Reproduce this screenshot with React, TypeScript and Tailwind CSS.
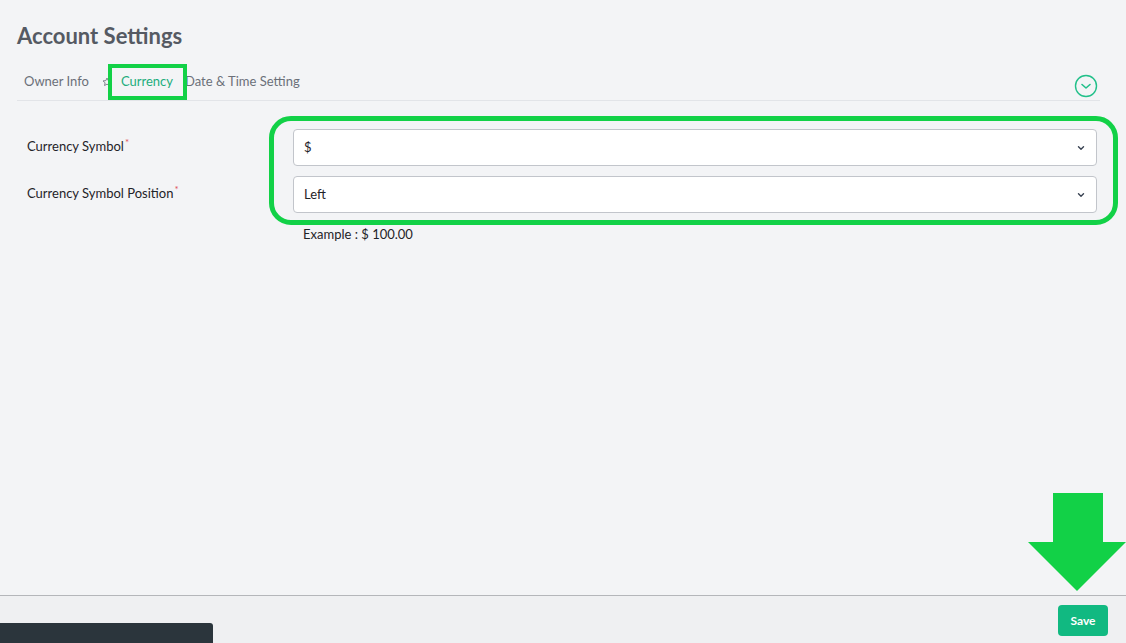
import React from 'react'

const font = { fontFamily: 'Lato, "Open Sans", sans-serif' }

const SelectBox = ({ value }: { value: string }) => (
  <div className="flex h-[37px] items-center justify-between rounded border border-[#c2c5cb] bg-white pl-[10px] pr-[10px]">
    <span className="text-[13px] text-[#1f2328]">{value}</span>
    <svg width="10" height="10" viewBox="0 0 10 10" fill="none">
      <path d="M2.5 3.8 5 6.2 7.5 3.8" stroke="#374151" strokeWidth="1.4" strokeLinecap="round" strokeLinejoin="round" />
    </svg>
  </div>
)

export default function App() {
  return (
    <div className="relative flex h-[643px] w-[1126px] flex-col overflow-hidden bg-[#f3f4f6]" style={font}>
      {/* main */}
      <div className="flex-1 pl-[17px] pr-[26px] pt-[22px]">
        <h1 className="text-[22px] font-bold leading-[28px] text-[#555a63]">Account Settings</h1>

        {/* tabs */}
        <div className="mt-[13px] flex h-[38px] items-center border-b border-[#e2e4e8] pr-[2px]">
          <div className="flex flex-1 items-center text-[13px] text-[#6b7079]">
            <span className="ml-[7px]">Owner Info</span>
            <svg className="ml-[13px]" width="10" height="10" viewBox="0 0 24 24" fill="none" stroke="#6b7079" strokeWidth="2">
              <path d="M12 2.5l2.9 6.2 6.6.7-5 4.5 1.4 6.6L12 17.2l-5.9 3.3 1.4-6.6-5-4.5 6.6-.7z" />
            </svg>
            <span className="ml-[9px] text-[#22ad7c]">Currency</span>
            <span className="ml-[12px]">Date &amp; Time Setting</span>
          </div>
          <svg width="24" height="24" viewBox="0 0 24 24" fill="none" className="mt-[8px]">
            <circle cx="12" cy="12" r="10.5" stroke="#22c08a" strokeWidth="1.4" />
            <path d="M8 10.5l4 3.5 4-3.5" stroke="#22c08a" strokeWidth="1.6" strokeLinecap="round" strokeLinejoin="round" />
          </svg>
        </div>

        {/* form */}
        <div className="mt-[28px] flex gap-[10px] pl-[10px] pr-[3px]">
          <div className="flex w-[256px] flex-col text-[13px] text-[#1f2328]">
            <div className="flex h-[37px] items-center pb-[2px]">
              Currency Symbol<sup className="ml-[1px] text-[#e0525b]">*</sup>
            </div>
            <div className="mt-[10px] flex h-[37px] items-center pb-[2px]">
              Currency Symbol Position<sup className="ml-[1px] text-[#e0525b]">*</sup>
            </div>
          </div>
          <div className="flex flex-1 flex-col gap-[10px]">
            <SelectBox value="$" />
            <SelectBox value="Left" />
            <div className="mt-[2px] pl-[10px] text-[13px] text-[#1f2328]">Example : $ 100.00</div>
          </div>
        </div>
      </div>

      {/* footer */}
      <div className="relative flex h-[48px] items-start justify-end border-t border-[#b4b6ba] bg-[#eff0f2] pr-[18px] pt-[9px]">
        <button className="h-[31px] w-[50px] rounded bg-[#11b981] text-[12px] font-bold text-white">Save</button>
        <div className="absolute bottom-0 left-0 h-[20px] w-[213px] rounded-tr-[3px] bg-[#2b353c]" />
      </div>

      {/* annotation overlays */}
      <div className="pointer-events-none absolute left-[108px] top-[64px] h-[36px] w-[79px] border-[4px] border-[#12d147]" />
      <div className="pointer-events-none absolute left-[269px] top-[116px] h-[109px] w-[849px] rounded-[22px] border-[5px] border-[#12d147]" />
      <svg className="pointer-events-none absolute left-[1028px] top-[493px]" width="98" height="99" viewBox="0 0 98 99">
        <path d="M25 0h50v49h23L49 98 0 49h25z" fill="#12d147" />
      </svg>
    </div>
  )
}
